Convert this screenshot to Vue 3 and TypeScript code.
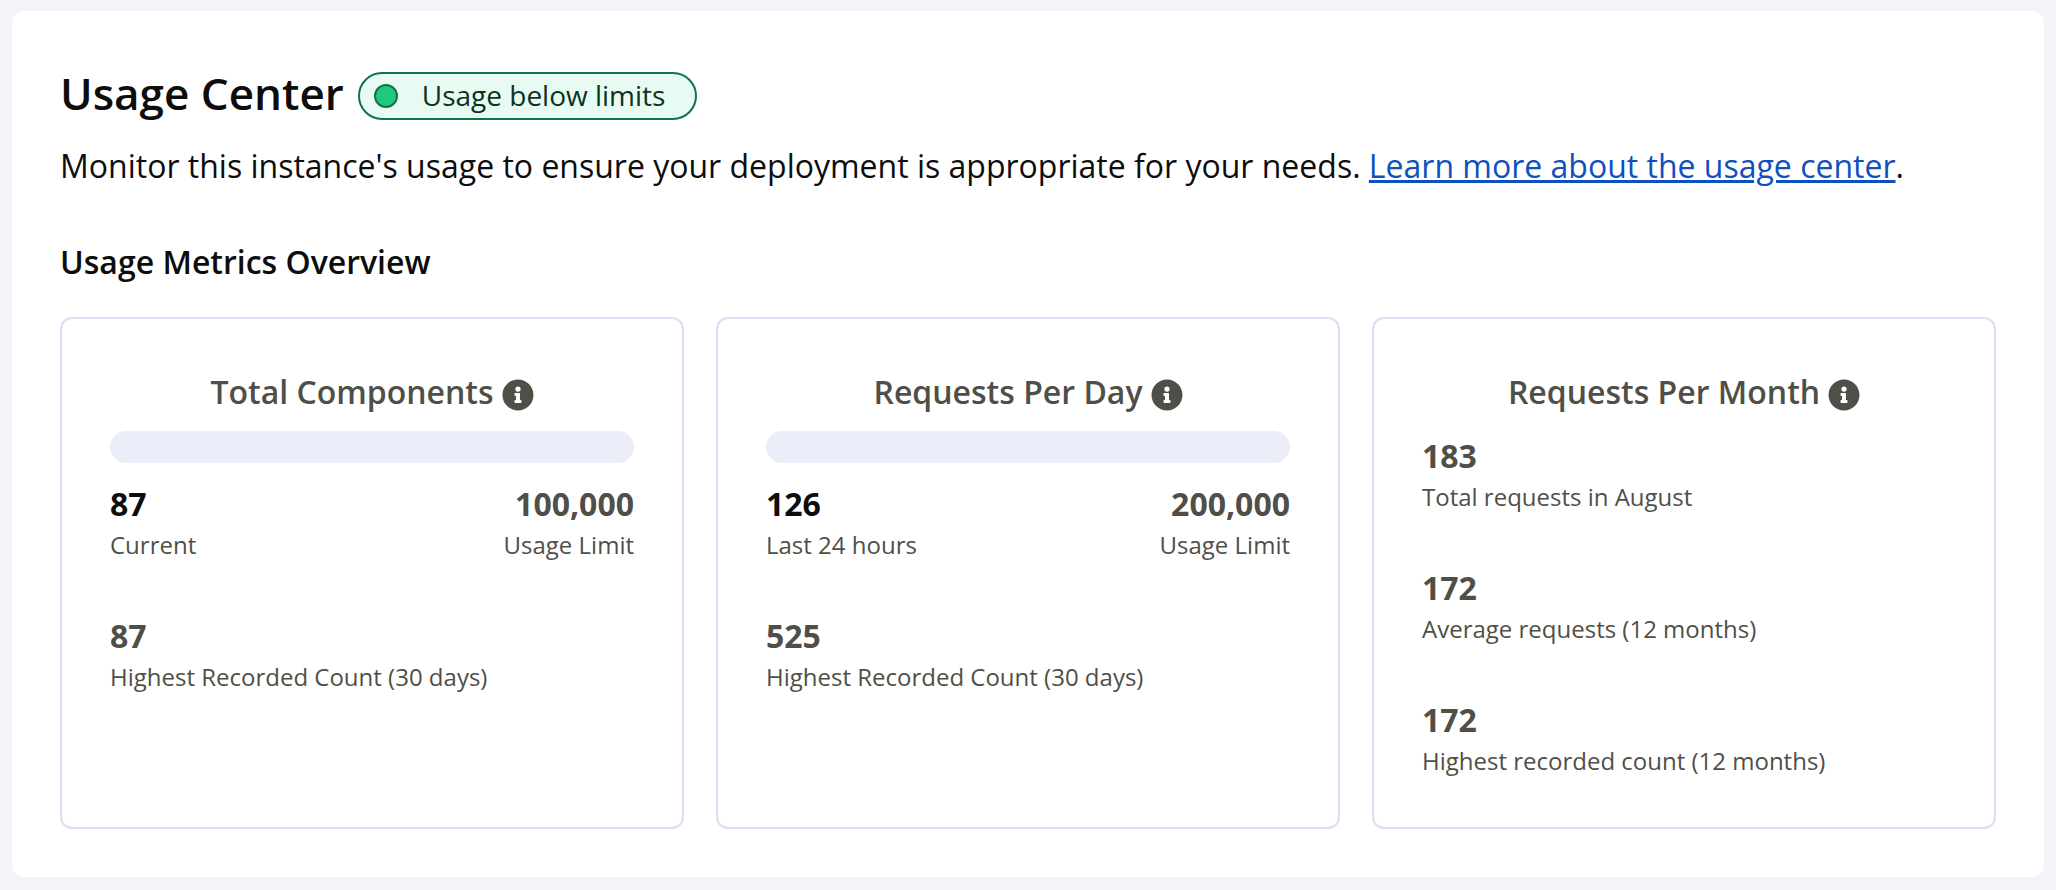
<script setup lang="ts">
interface Metric {
  value: string
  label: string
}

interface Card {
  id: string
  title: string
  hint: string
  usage?: { current: Metric; limit: Metric; percent: number }
  metrics: Metric[]
}

const cards: Card[] = [
  {
    id: 'components',
    title: 'Total Components',
    hint: 'About total components',
    usage: {
      current: { value: '87', label: 'Current' },
      limit: { value: '100,000', label: 'Usage Limit' },
      percent: 0,
    },
    metrics: [{ value: '87', label: 'Highest Recorded Count (30 days)' }],
  },
  {
    id: 'requests-day',
    title: 'Requests Per Day',
    hint: 'About requests per day',
    usage: {
      current: { value: '126', label: 'Last 24 hours' },
      limit: { value: '200,000', label: 'Usage Limit' },
      percent: 0,
    },
    metrics: [{ value: '525', label: 'Highest Recorded Count (30 days)' }],
  },
  {
    id: 'requests-month',
    title: 'Requests Per Month',
    hint: 'About requests per month',
    metrics: [
      { value: '183', label: 'Total requests in August' },
      { value: '172', label: 'Average requests (12 months)' },
      { value: '172', label: 'Highest recorded count (12 months)' },
    ],
  },
]
</script>

<template>
  <main class="panel">
    <header class="header">
      <h1 class="heading">Usage Center</h1>
      <span class="status">
        <span class="dot"></span>
        <span class="status-text">Usage below limits</span>
      </span>
    </header>
    <p class="intro">
      Monitor this instance's usage to ensure your deployment is appropriate for your needs.
      <a href="#usage-center">Learn more about the usage center</a>.
    </p>

    <h2 class="subheading">Usage Metrics Overview</h2>
    <div class="cards">
      <section v-for="card in cards" :key="card.id" class="card">
        <div class="card-head">
          <h3 class="card-title">{{ card.title }}</h3>
          <button type="button" class="info" :aria-label="card.hint">
            <svg viewBox="0 0 512 512" aria-hidden="true">
              <path
                fill="currentColor"
                d="M256 8C119 8 8 119 8 256s111 248 248 248 248-111 248-248S393 8 256 8zm0 110a42 42 0 1 1 0 84 42 42 0 0 1 0-84zm56 254a12 12 0 0 1-12 12h-88a12 12 0 0 1-12-12v-24a12 12 0 0 1 12-12h12v-64h-12a12 12 0 0 1-12-12v-24a12 12 0 0 1 12-12h64a12 12 0 0 1 12 12v100h12a12 12 0 0 1 12 12z"
              />
            </svg>
          </button>
        </div>

        <template v-if="card.usage">
          <div
            class="bar"
            role="progressbar"
            :aria-label="card.title"
            :aria-valuenow="card.usage.percent"
            aria-valuemin="0"
            aria-valuemax="100"
          >
            <div class="fill" :style="{ width: card.usage.percent + '%' }"></div>
          </div>
          <div class="usage">
            <div class="metric current">
              <strong>{{ card.usage.current.value }}</strong>
              <span>{{ card.usage.current.label }}</span>
            </div>
            <div class="metric limit">
              <strong>{{ card.usage.limit.value }}</strong>
              <span>{{ card.usage.limit.label }}</span>
            </div>
          </div>
        </template>

        <div class="metrics">
          <div v-for="metric in card.metrics" :key="metric.label" class="metric">
            <strong>{{ metric.value }}</strong>
            <span>{{ metric.label }}</span>
          </div>
        </div>
      </section>
    </div>
  </main>
</template>

<style>
body {
  margin: 0;
  background: #f3f4fa;
}
</style>

<style scoped>
.panel {
  margin: 11px 12px;
  padding: 48px;
  border-radius: 12px;
  background: #fff;
  color: #0d0d0d;
  font-family: 'Open Sans', 'Noto Sans', sans-serif;
  font-size: 32px;
  line-height: 50px;
}

h1,
h2,
h3,
p {
  margin: 0;
}

.header {
  display: flex;
  align-items: center;
  gap: 14px;
}

.heading {
  font-size: 44px;
  font-weight: 600;
  line-height: 68px;
}

.status {
  display: flex;
  align-items: center;
  gap: 24px;
  box-sizing: border-box;
  height: 48px;
  margin-top: 6px;
  padding: 0 30px 0 14px;
  border: 2px solid #12734a;
  border-radius: 24px;
  background: #e7fbf3;
  color: #0b3322;
}

.status-text {
  padding-bottom: 2px;
  font-size: 28px;
  line-height: 42px;
}

.dot {
  box-sizing: border-box;
  width: 24px;
  height: 24px;
  border: 2px solid #12734a;
  border-radius: 50%;
  background: #1fc97f;
}

.intro {
  margin-top: 14px;
}

.intro a {
  color: #0f50bf;
}

.subheading {
  margin: 46px 0 30px;
  font-size: 32px;
  font-weight: 600;
}

.cards {
  display: grid;
  grid-template-columns: repeat(3, 1fr);
  gap: 32px;
}

.card {
  padding: 48px 48px 50px;
  border: 2px solid #d9def2;
  border-radius: 12px;
  color: #504f47;
}

.card-head {
  display: flex;
  align-items: center;
  justify-content: center;
  gap: 8px;
  margin-bottom: 14px;
}

.card-title {
  font-size: 32px;
  font-weight: 600;
}

.info {
  display: flex;
  margin: 6px 0 0;
  padding: 0;
  border: 0;
  background: none;
  color: inherit;
  cursor: pointer;
}

.info svg {
  width: 32px;
  height: 32px;
}

.bar {
  height: 32px;
  margin-bottom: 16px;
  overflow: hidden;
  border-radius: 16px;
  background: #ebeef8;
}

.fill {
  height: 100%;
  background: #1fc97f;
}

.usage {
  display: flex;
  justify-content: space-between;
  margin-bottom: 50px;
}

.metrics {
  display: flex;
  flex-direction: column;
  gap: 50px;
}

.metric {
  display: flex;
  flex-direction: column;
}

.metric strong {
  font-weight: 700;
}

.metric span {
  font-size: 24px;
  line-height: 32px;
}

.current strong {
  color: #0d0d0d;
}

.limit {
  text-align: right;
}
</style>
